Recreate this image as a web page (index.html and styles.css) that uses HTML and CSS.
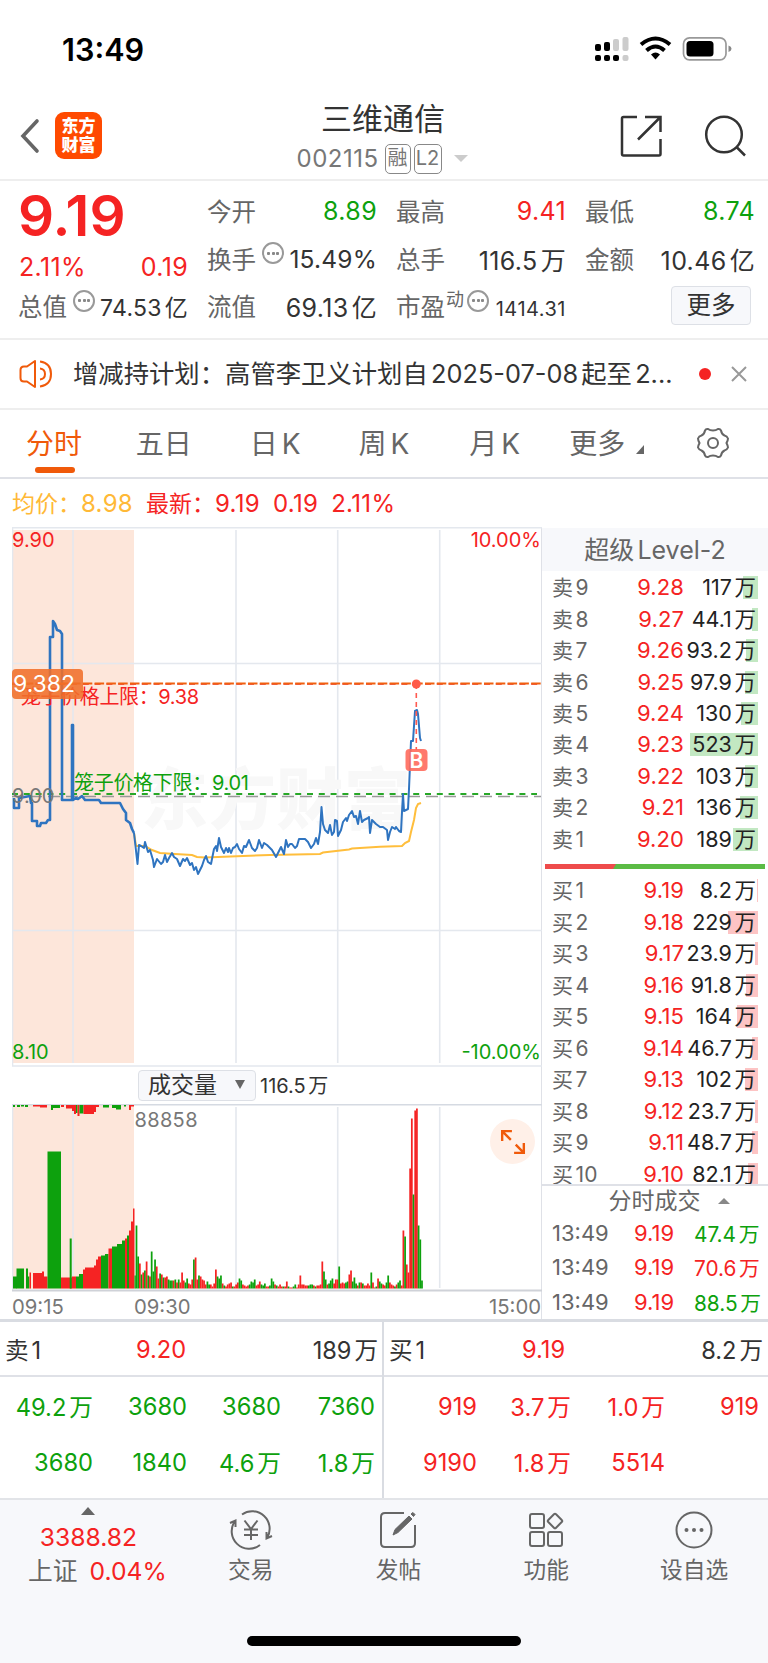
FILE: index.html
```html
<!DOCTYPE html>
<html lang="zh-CN">
<head>
  <meta charset="UTF-8">
  <title>三维通信 002115</title>
  <link rel="stylesheet" href="styles.css">
</head>
<body>

<!-- 状态栏 -->
<div class="status-bar">
  <span class="clock">13:49</span>
  <svg class="status-icons" width="140" height="28" viewBox="0 0 140 28">
    <g fill="#000">
      <rect x="0" y="9" width="6" height="7" rx="2"/><rect x="9" y="7" width="6" height="9" rx="2"/>
      <rect x="0" y="20" width="6" height="6" rx="2"/><rect x="9" y="20" width="6" height="6" rx="2"/><rect x="18" y="20" width="6" height="6" rx="2"/>
    </g>
    <g fill="#ccc">
      <rect x="18" y="4" width="6" height="12" rx="2"/><rect x="27.500" y="2" width="6" height="14" rx="2"/><rect x="27.500" y="20" width="6" height="6" rx="2"/>
    </g>
    <g fill="none" stroke="#000" stroke-width="4">
      <path d="M46 9.500Q60.500-2.500 75 9.500"/><path d="M51.500 15.500Q60.500 7.500 69.500 15.500"/>
    </g>
    <path d="M56 19.500Q60.500 15.500 65 19.500L60.500 24.500Z"/>
    <rect x="88.500" y="2.800" width="42.500" height="22" rx="6" fill="none" stroke="#999" stroke-width="1.700"/>
    <rect x="91.500" y="6" width="27" height="15.500" rx="3.500"/>
    <path d="M133.500 10.500q3 1 3 3.300t-3 3.300z" fill="#888"/>
  </svg>
</div>

<!-- 标题栏 -->
<div class="header">
  <svg class="back" width="20" height="36" viewBox="0 0 20 36"><path d="M17 3L3 18L17 33" fill="none" stroke="#666" stroke-width="3.600" stroke-linecap="round"/></svg>
  <div class="logo">东方<br>财富</div>
  <div class="stock">
    <h1>三维通信</h1>
    <div class="code"><span class="num">002115</span><span class="badge">融</span><span class="badge l2">L2</span><i class="arrow-down"></i></div>
  </div>
  <svg class="share" width="44" height="44" viewBox="0 0 44 44"><path d="M18 3H4.500Q3 3 3 4.500V40Q3 41.500 4.500 41.500H40Q41.500 41.500 41.500 40V25M26 3H41.500V18M41 3.500L19 25.500" fill="none" stroke="#333" stroke-width="2.500"/></svg>
  <svg class="search" width="44" height="44" viewBox="0 0 44 44"><circle cx="21" cy="20.500" r="17.800" fill="none" stroke="#333" stroke-width="2.500"/><path d="M33.500 33L42 41.500" stroke="#333" stroke-width="2.500"/></svg>
</div>

<!-- 行情 -->
<div class="quote">
  <div class="col main">
    <div class="price">9.19</div>
    <div class="row red change"><span>2.11%</span><span>0.19</span></div>
    <div class="row"><label>总值</label><i class="tip"></i><span class="fit">74.53亿</span></div>
  </div>
  <div class="col">
    <div class="row"><label>今开</label><span class="green">8.89</span></div>
    <div class="row"><label>换手</label><i class="tip"></i><span class="tight">15.49%</span></div>
    <div class="row"><label>流值</label><span>69.13亿</span></div>
  </div>
  <div class="col">
    <div class="row"><label>最高</label><span class="red">9.41</span></div>
    <div class="row"><label>总手</label><span>116.5万</span></div>
    <div class="row"><label>市盈<small>动</small></label><i class="tip near"></i><span class="pe">1414.31</span></div>
  </div>
  <div class="col">
    <div class="row"><label>最低</label><span class="green">8.74</span></div>
    <div class="row"><label>金额</label><span>10.46亿</span></div>
    <div class="row last"><button class="more-btn">更多</button></div>
  </div>
</div>

<!-- 公告 -->
<div class="news">
  <svg width="34" height="30" viewBox="0 0 34 30" fill="none" stroke="#f05a0a" stroke-width="2">
    <path d="M16 2L8 7.500H5Q1.500 7.500 1.500 11V19Q1.500 22.500 5 22.500H8L16 28Z" stroke-linejoin="round"/>
    <path d="M21 9.500Q26 10 26 15T21 20.500M21 2.500Q32 4 32 15T21 27.500"/>
  </svg>
  <p>增减持计划：高管李卫义计划自2025-07-08起至2...</p>
  <i class="dot"></i>
  <svg class="close" width="18" height="18" viewBox="0 0 18 18"><path d="M2 2L16 16M16 2L2 16" stroke="#999" stroke-width="2"/></svg>
</div>

<!-- 周期 -->
<div class="tabs">
  <span class="tab active">分时</span>
  <span class="tab">五日</span>
  <span class="tab">日K</span>
  <span class="tab">周K</span>
  <span class="tab">月K</span>
  <span class="tab more">更多<i></i></span>
  <svg class="gear" width="34" height="34" viewBox="0 0 34 34" fill="none" stroke="#666" stroke-width="2">
    <circle cx="17" cy="17" r="5"/>
    <path d="M9 4.500Q10 2.500 12 3Q14 4.500 17 4.500T22 3Q24 2.500 25 4.500Q25.500 8 28.500 9.500Q31 10 32 12.500Q32 14 30.500 17Q32 20 32 21.500Q31 24 28.500 24.500Q25.500 26 25 29.500Q24 31.500 22 31Q20 29.500 17 29.500T12 31Q10 31.500 9 29.500Q8.500 26 5.500 24.500Q3 24 2 21.500Q2 20 3.500 17Q2 14 2 12.500Q3 10 5.500 9.500Q8.500 8 9 4.500Z"/>
  </svg>
</div>

<div class="latest">
  <span class="avg">均价：<b>8.98</b></span><span>最新：<b>9.19</b></span><span><b>0.19</b></span><span><b>2.11%</b></span>
</div>

<div class="board">
  <div class="charts">
    <!-- 分时图 -->
    <svg class="chart" width="530" height="540" viewBox="12 527 530 540">
      <rect x="12" y="530" width="122" height="533" fill="#fde6da"/>
      <g stroke="#e4e8ee" stroke-width="1.600">
        <path d="M12 527.800H542M12.500 527V1066M12 1066H542M12 663.500H542M12 930.500H542"/>
        <path d="M73 530V1063M236 530V1063M337.700 530V1063M439.700 530V1063"/>
      </g>
      <text class="watermark" x="141" y="824" textLength="270">东方财富</text>
      <path d="M12 796.500H541" stroke="#999" stroke-width="1.700" stroke-dasharray="12 6"/>
      <path d="M12 794H537" stroke="#28a828" stroke-width="2" stroke-dasharray="6 5.800"/>
      <path class="avg-line" d="M134 833L136 846L145 846L152 850L160 853L175 854L192 855L197 857L205 857.500L270 855L320 854L323 852.500L349 849.500L352 848.500L380 846.700L402 846L405 843L409 841L411 832L414 820L416 808L418 804L421 803"/>
      <path class="price-line auction" d="M14 798V808H19V798L30 796L31 803H32V821H37V826H40L41 823H46L48 820H50V637H53V621L55 624L57 630L60 631L62 634V800H72V725H73V800L76 798L78 799L82 796L85 800H99L101 803H120L123 809L126 813V820L130 823L132 829L134 833"/>
      <path class="price-line" d="M134 833L137.500 864L139 845L141 846L144 848L145 842L148 852L150 850L153 860L154 867L157 859L161 864L163 862L165 855L167 862L169 858L172 853L174 857L177 859L180 866L183 859L185 861L187 858L190 865L192 863L194 870L196 867L198 874L202 866L204 860L206 856L208 862L211 864L214 849L216 846L217 851L219 838L221 847L224 853L226 848L228 852L229 848L231 853L233 848L235 847L237 844L239 849L242 853L244 846L246 847L249 840L252 848L255 851L257 848L259 840L262 848L264 843L267 845L270 848L272 850L276 857L281 847L284 854L286 840L288 847L290 844L292 844L295 848L297 846L299 839L305 839L308 842L311 848L314 844L316 838L318 844L320 832L321.500 807L323 824L325 830L328 833L330 825L332 835L334 832L335 820L337 821L338 836L341 830L343 822L346 818L347 821L349 815L352 811L354 817L356 816L358 824L360 811L362 822L364 820L368 818L369 817L370 833L372 820L376 824L380 827L383 827L387 830L388 840L390 832L392 827L395 829L396 827L399 831L401 832L402 812L403 794L404 811L408 809L409 789L411 741L413 741L415 711L417 710L418 714L420 738L421 741"/>
      <path d="M12 684H541" stroke="#e22" stroke-width="1.500" stroke-dasharray="6 5.800"/>
      <path d="M12 683.500H541" stroke="#f06010" stroke-width="2" stroke-dasharray="9.500 2.300"/>
      <text class="t red" x="21" y="704" textLength="178">笼子价格上限：9.38</text>
      <text class="t green" x="74" y="790" textLength="175">笼子价格下限：9.01</text>
      <text class="t red" x="12" y="547">9.90</text>
      <text class="t red end" x="541" y="547">10.00%</text>
      <text class="t gray" x="12" y="803">9.00</text>
      <text class="t green" x="12" y="1059">8.10</text>
      <text class="t green end" x="541" y="1059">-10.00%</text>
      <rect x="12" y="669" width="71" height="30" rx="4" fill="#f0702a" fill-opacity=".88"/>
      <text class="tag" x="13" y="692" textLength="62">9.382</text>
      <path d="M416.300 684V750" stroke="#ff5a50" stroke-width="1.600" stroke-dasharray="5 4"/>
      <circle cx="416.300" cy="684" r="4.500" fill="#ff5a48"/>
      <rect x="405.500" y="749" width="22" height="22" rx="4" fill="#ff6a5c" fill-opacity=".9"/>
      <text class="buy" x="416.500" y="767.500">B</text>
    </svg>

    <div class="indicator">
      <div class="select">成交量<i></i></div>
      <span>116.5万</span>
    </div>

    <!-- 成交量 -->
    <div class="volume">
      <svg class="chart" width="530" height="188" viewBox="12 1104 530 188">
        <rect x="12" y="1105" width="122" height="184" fill="#fde6da"/>
        <g stroke="#e4e8ee" stroke-width="1.600">
          <path d="M12.500 1104V1290M73 1107V1288M236 1107V1288M337.700 1107V1288M439.700 1107V1288"/>
        </g>
        <path d="M12 1104.700H542" stroke="#d5dae2" stroke-width="1.500"/>
        <path d="M12 1290.500H542" stroke="#cfd2d8" stroke-width="2"/>
        <g id="bars"></g>
        <text class="t gray" x="134.500" y="1126.500" textLength="63">88858</text>
      </svg>
      <div class="expand">
        <svg width="26" height="26" viewBox="0 0 24 24" fill="none" stroke="#f05a0a" stroke-width="2.200"><path d="M2 11V2H11M2 2L10 10M22 13V22H13M14.500 14.500L22 22"/></svg>
      </div>
    </div>
    <div class="axis"><span>09:15</span><span>09:30</span><span>15:00</span></div>
  </div>

  <!-- 盘口 -->
  <div class="depth">
    <div class="depth-title">超级Level-2</div>
    <div class="orders" id="sell"></div>
    <div class="ratio"></div>
    <div class="orders buy-list" id="buy"></div>
    <div class="deals-title">分时成交<i></i></div>
    <div class="deal"><span>13:49</span><span class="red">9.19</span><span class="green">47.4万</span></div>
    <div class="deal"><span>13:49</span><span class="red">9.19</span><span class="red">70.6万</span></div>
    <div class="deal"><span>13:49</span><span class="red">9.19</span><span class="green">88.5万</span></div>
  </div>
</div>

<!-- 买一卖一队列 -->
<div class="queue">
  <div class="side">
    <div class="side-head"><span>卖1</span><span class="red">9.20</span><span>189万</span></div>
    <div class="cells green">
      <span>49.2万</span><span>3680</span><span>3680</span><span>7360</span>
      <span>3680</span><span>1840</span><span>4.6万</span><span>1.8万</span>
    </div>
  </div>
  <div class="side">
    <div class="side-head"><span>买1</span><span class="red">9.19</span><span>8.2万</span></div>
    <div class="cells red">
      <span>919</span><span>3.7万</span><span>1.0万</span><span>919</span>
      <span>9190</span><span>1.8万</span><span>5514</span>
    </div>
  </div>
</div>

<!-- 底部导航 -->
<div class="footer">
  <div class="nav">
    <div class="index">
      <i></i>
      <div class="red">3388.82</div>
      <div class="sh">上证<span class="red">0.04%</span></div>
    </div>
    <div class="item">
      <svg width="44" height="40" viewBox="0 0 44 40" fill="none" stroke="#666" stroke-width="2">
        <path d="M13 4.500A17.500 17.500 0 0 1 38 28M31 35A17.500 17.500 0 0 1 6 11M1 13L6.500 10.500V17M43 26L37.500 28.500V22"/>
        <path d="M15.500 10.500L22 19L28.500 10.500M22 19V30M15 19.500H29M15 25H29"/>
      </svg>
      交易
    </div>
    <div class="item">
      <svg width="40" height="40" viewBox="0 0 40 40" fill="none" stroke="#666" stroke-width="2">
        <path d="M26 3H7Q3 3 3 7V33Q3 37 7 37H33Q37 37 37 33V15"/>
        <path d="M15 25L17 19.500L31 6L34 9L20 22.500ZM33 4L35 2.500L37 4.500L35.500 6.500Z" fill="#666" stroke-width="1"/>
      </svg>
      发帖
    </div>
    <div class="item">
      <svg width="40" height="40" viewBox="0 0 40 40" fill="none" stroke="#666" stroke-width="2">
        <rect x="4" y="4" width="14" height="14" rx="2"/><rect x="4" y="22" width="14" height="14" rx="2"/><rect x="22" y="22" width="14" height="14" rx="2"/>
        <rect x="23.500" y="5.500" width="11" height="11" rx="1.500" transform="rotate(45 29 11)"/>
      </svg>
      功能
    </div>
    <div class="item">
      <svg width="40" height="40" viewBox="0 0 40 40"><circle cx="20" cy="20" r="17.500" fill="none" stroke="#666" stroke-width="2"/><g fill="#666"><circle cx="12.500" cy="20" r="2"/><circle cx="20" cy="20" r="2"/><circle cx="27.500" cy="20" r="2"/></g></svg>
      设自选
    </div>
  </div>
  <div class="home-bar"></div>
</div>

<script src="script.js"></script>
</body>
</html>
```
FILE: styles.css
```css
* {
  margin: 0; padding: 0; box-sizing: border-box;
}
body {
  width: 768px;
  height: 1663px;
  overflow: hidden;
  background: #fff;
  color: #333;
  font-family: Inter, "Noto Sans CJK SC", sans-serif;
  font-size: 24px;
  text-autospace: normal;
  white-space: nowrap;
}
i { font-style: normal; flex: none; }
b { font-weight: 400; }
svg { display: block; flex: none; }
.red { color: #f52323; }
.green { color: #0da10d; }

/* 状态栏 */
.status-bar {
  height: 98px;
  padding: 0 35px 0 62px;
  display: flex;
  justify-content: space-between;
  align-items: center;
}
.clock {
  font-size: 30.6px;
  font-weight: 600;
  color: #000;
}
.status-icons { margin-right: -2px; }

/* 标题栏 */
.header {
  height: 83px;
  padding-left: 20px;
  display: flex;
  align-items: center;
  border-bottom: 2px solid #eee;
}
.back { margin-top: -6px; }
.logo {
  width: 47px;
  height: 47px;
  margin: -7px 0 0 15px;
  padding-top: 5px;
  border-radius: 9px;
  background: #ff4a00;
  color: #fff;
  font-size: 17px;
  font-weight: 900;
  line-height: 19px;
  text-align: center;
}
.stock {
  width: 300px;
  margin: 0 0 0 131px;
  text-align: center;
}
.stock h1 {
  font-size: 31px;
  font-weight: 400;
  line-height: 38px;
}
.code {
  height: 39px;
  padding: 2px 2px 0 0;
  display: flex;
  justify-content: center;
  align-items: center;
  color: #777;
}
.code .num { letter-spacing: .5px; }
.badge {
  width: 26px;
  height: 30px;
  margin-left: 6px;
  border: 1.5px solid #888;
  border-radius: 5px;
  font-size: 20px;
  line-height: 27px;
  text-align: center;
}
.badge.l2 { width: 28px; margin-left: 3px; }
.arrow-down {
  margin-left: 12px;
  border: 7px solid transparent;
  border-top-color: #ccc;
  border-bottom: 0;
}
.share { margin: -6px 0 0 86px; }
.search { margin: -6px 0 0 40px; }

/* 行情 */
.quote {
  height: 159px;
  padding: 7px 13px 0 19px;
  display: grid;
  grid-template-columns: repeat(4, 169px);
  column-gap: 20px;
  border-bottom: 2px solid #eee;
}
.row {
  height: 47.5px;
  padding-bottom: 1px;
  display: flex;
  justify-content: space-between;
  align-items: center;
}
.row span {
  font-size: 25px;
  letter-spacing: .35px;
}
.row label {
  margin: -1px 0 0 -1px;
  font-size: 24.5px;
  color: #666;
  display: flex;
}
.row small {
  font-size: 18px;
  margin: -3px 0 0 1px;
}
.price {
  height: 55px;
  margin-left: -1px;
  font-size: 56.5px;
  font-weight: 600;
  line-height: 55px;
  color: #f52323;
}
.row.change { height: 40px; padding: 7px 0 0; }
.row.change span { font-size: 25px; }
.tip {
  width: 22px;
  height: 22px;
  margin: -11px 0 0 1px;
  border: 2px solid #999;
  border-radius: 50%;
  background:
    radial-gradient(circle, #888 1.3px, transparent 1.8px) center / 5px 5px no-repeat,
    radial-gradient(circle, #888 1.3px, transparent 1.8px) 2px center / 5px 5px no-repeat,
    radial-gradient(circle, #888 1.3px, transparent 1.8px) 11px center / 5px 5px no-repeat;
}
.tip.near { margin-right: 4px; }
.row .fit { font-size: 23px; letter-spacing: .3px; }
.row .tight { font-size: 24.5px; letter-spacing: .2px; }
.row .pe { font-size: 20px; padding-top: 6px; letter-spacing: .5px; }
.more-btn {
  width: 80px;
  height: 39px;
  margin: -2px 4px 0 auto;
  border: 1.5px solid #dde0e6;
  border-radius: 4px;
  background: #f7f8fb;
  color: #333;
  font: inherit;
  font-size: 24.5px;
  line-height: 35px;
}

/* 公告 */
.news {
  height: 70px;
  padding: 0 20px 0 19px;
  display: flex;
  align-items: center;
  border-bottom: 2px solid #eee;
}
.news p {
  width: 612px;
  margin: -4px 0 0 20px;
  font-size: 25.35px;
}
.dot {
  width: 12px;
  height: 12px;
  margin-left: 14px;
  border-radius: 50%;
  background: #f52323;
}
.close { margin-left: 19px; }

/* 周期 */
.tabs {
  height: 69px;
  padding: 0 38px 3px 26px;
  display: flex;
  align-items: center;
  border-bottom: 2px solid #dfe1e7;
  color: #666;
  font-size: 28px;
}
.tab { width: 110px; }
.tab:nth-child(2) { width: 114px; }
.tab:nth-child(3) { width: 109px; letter-spacing: .5px; }
.tab:nth-child(4) { width: 111px; letter-spacing: .5px; }
.tab:nth-child(5) { width: 100px; letter-spacing: .5px; }
.tab.more { width: 127px; }
.more i {
  display: inline-block;
  margin-left: 11px;
  border-left: 8px solid transparent;
  border-bottom: 9px solid #666;
}
.gear { margin-top: 2px; }
.tab.active { position: relative; color: #f05a0a; }
.tab.active::after {
  content: "";
  position: absolute;
  left: 9px;
  bottom: -11px;
  width: 40px;
  height: 6px;
  border-radius: 3px;
  background: #f05a0a;
}

.latest {
  height: 48px;
  padding: 0 0 1px 12px;
  display: flex;
  align-items: baseline;
  gap: 13px;
  color: #f52323;
  font-size: 23px;
  line-height: 49px;
}
.latest b { font-size: 24px; letter-spacing: .3px; }
.latest .avg { color: #ffb937; }

/* 图表区 */
.board {
  height: 795px;
  display: flex;
  border-bottom: 3px solid #d9dce2;
}
.charts {
  width: 542px;
  padding-left: 12px;
  border-right: 1px solid #dfe1e7;
}
.chart text { font-family: Inter, "Noto Sans CJK SC", sans-serif; }
.chart .t { font-size: 20px; fill: #f52323; }
.chart .green { fill: #0da10d; }
.chart .gray { fill: #777; }
.chart .end { text-anchor: end; }
.chart .tag { font-size: 23px; fill: #fff; }
.chart .buy { font-size: 21px; font-weight: 600; fill: #fff; text-anchor: middle; }
.chart .watermark { font-size: 67px; font-weight: 900; fill: #f8f8f8; }
.price-line {
  fill: none;
  stroke: #2f74c0;
  stroke-width: 2;
  stroke-linejoin: round;
}
.price-line.auction { stroke-width: 2.6; }
.avg-line {
  fill: none;
  stroke: #ffbe3c;
  stroke-width: 2;
}
.indicator {
  height: 37px;
  padding: 3px 0 0 126px;
  display: flex;
  font-size: 20px;
  line-height: 32px;
}
.select {
  width: 118px;
  height: 31px;
  margin-right: 4px;
  padding-left: 9px;
  border: 1.5px solid #dde0e6;
  border-radius: 4px;
  background: #f7f8fb;
  font-size: 23px;
  line-height: 29px;
}
.select i {
  display: inline-block;
  margin: 0 0 4px 18px;
  border: 5px solid transparent;
  border-top: 9px solid #666;
  border-bottom: 0;
}
.volume { position: relative; }
.expand {
  position: absolute;
  left: 478px;
  top: 15px;
  width: 45px;
  height: 45px;
  display: flex;
  align-items: center;
  justify-content: center;
  border-radius: 50%;
  background: #fff0e8;
}
.axis {
  display: grid;
  grid-template-columns: 122px 1fr auto;
  color: #777;
  font-size: 20.3px;
  line-height: 29px;
}

/* 盘口 */
.depth {
  width: 226px;
  padding-top: 1px;
}
.depth-title {
  height: 43px;
  margin-bottom: 1px;
  background: #f7f8fb;
  color: #666;
  font-size: 25px;
  line-height: 44px;
  text-align: center;
}
.order {
  height: 31.45px;
  padding: 0 10px;
  display: grid;
  grid-template-columns: 60px 72px 1fr;
  align-items: center;
  font-size: 22px;
  line-height: 31px;
}
.order .name { color: #666; font-size: 21px; }
.order .num { text-align: right; letter-spacing: .1px; }
.order .vol {
  position: relative;
  text-align: right;
  padding-right: 2px;
  color: #222;
  font-size: 21.5px;
}
.order .vol i {
  position: absolute;
  right: 0;
  top: 4px;
  height: 23px;
  background: rgba(70, 185, 70, .33);
  z-index: -1;
}
.buy-list .vol i { background: rgba(250, 70, 70, .32); }
.ratio {
  height: 5px;
  margin: 9px 3px 6px;
  background: linear-gradient(120deg, #ee4b4b 61px, #5bbb45 62px);
}
.buy-list {
  height: 309px;
  overflow: hidden;
}
.buy-list .order { height: 31.5px; }
.deals-title {
  height: 32px;
  padding-left: 28px;
  border-top: 2px solid #dfe1e7;
  color: #666;
  font-size: 23px;
  text-align: center;
  line-height: 30px;
}
.deals-title i {
  display: inline-block;
  margin: 0 0 5px 17px;
  border: 6px solid transparent;
  border-bottom-color: #888;
  border-top: 0;
}
.deal {
  height: 34.7px;
  padding: 0 12px 1.5px 10px;
  display: grid;
  grid-template-columns: 82px 60px 1fr;
  align-items: center;
  color: #666;
  font-size: 22px;
}
.deal span:last-child { text-align: right; font-size: 20.8px; }

/* 队列 */
.queue {
  height: 176px;
  display: flex;
}
.side { width: 384px; }
.side:first-child { border-right: 2px solid #d9dce2; }
.side-head {
  height: 55px;
  padding: 1px 5px 0;
  display: grid;
  grid-template-columns: 131px 1fr auto;
  align-items: center;
  border-bottom: 2px solid #dfe1e7;
}
.side:first-child .side-head { padding-right: 4px; }
.side + .side .side-head { grid-template-columns: 133px 1fr auto; }
.side-head span { font-size: 23.6px; }
.cells {
  display: grid;
  grid-template-columns: repeat(4, 94px);
  grid-auto-rows: 56px;
  margin-left: -1px;
  padding-top: 1px;
  align-items: center;
  text-align: right;
  font-size: 23.7px;
}

/* 底部 */
.footer {
  height: 165px;
  border-top: 2px solid #e2e4e8;
  background: #f7f8fb;
}
.nav {
  height: 136px;
  display: flex;
  color: #666;
}
.index {
  width: 177px;
  padding-top: 7px;
  text-align: center;
  font-size: 24.7px;
  line-height: 35px;
}
.index i {
  display: block;
  width: 0;
  margin: 0 auto 5px;
  border: 7px solid transparent;
  border-bottom: 8px solid #666;
  border-top: 0;
}
.sh { padding-left: 18px; line-height: 33px; }
.sh span { margin-left: 9px; }
.item {
  width: 148px;
  padding-top: 10px;
  text-align: center;
  font-size: 22.7px;
  line-height: 40px;
}
.item svg { margin: 0 auto; }
.home-bar {
  width: 274px;
  height: 10px;
  margin: 0 auto;
  border-radius: 5px;
  background: #000;
}
```
FILE: script.js
```js
const RED = '#f52323';
const GREEN = '#0da10d';

// 档位, 价格, 数量, 底色宽度
const sell = [
  ['卖9', '9.28', '117万', 15], ['卖8', '9.27', '44.1万', 6], ['卖7', '9.26', '93.2万', 12],
  ['卖6', '9.25', '97.9万', 13], ['卖5', '9.24', '130万', 17], ['卖4', '9.23', '523万', 68],
  ['卖3', '9.22', '103万', 13], ['卖2', '9.21', '136万', 18], ['卖1', '9.20', '189万', 25]
];
const buy = [
  ['买1', '9.19', '8.2万', 1], ['买2', '9.18', '229万', 30], ['买3', '9.17', '23.9万', 3],
  ['买4', '9.16', '91.8万', 12], ['买5', '9.15', '164万', 21], ['买6', '9.14', '46.7万', 6],
  ['买7', '9.13', '102万', 13], ['买8', '9.12', '23.7万', 3], ['买9', '9.11', '48.7万', 6],
  ['买10', '9.10', '82.1万', 10]
];

function renderOrders(id, list) {
  document.getElementById(id).innerHTML = list.map(o => `
    <div class="order">
      <span class="name">${o[0]}</span>
      <span class="num red">${o[1]}</span>
      <span class="vol"><i style="width:${o[3]}px"></i>${o[2]}</span>
    </div>`).join('');
}

// 集合竞价: x起, x止, 高度, 颜色
const auction = [
  [13, 17, 12, 'g'], [16.5, 24, 20, 'g'], [26, 28, 20, 'g'], [28, 29.3, 12, 'g'], [29.5, 31, 16, 'r'],
  [33, 42, 15.5, 'r'], [42, 44, 17, 'r'], [44, 47.5, 12, 'r'], [47.5, 61, 137, 'g'], [61, 72, 11, 'r'],
  [69.7, 71.7, 50, 'g'], [72, 76, 12, 'r'], [76, 79, 12, 'g'], [79, 83, 14.5, 'g'], [83, 85, 19, 'r'],
  [85, 94, 21, 'r'], [94, 96, 23, 'r'], [96, 98, 29, 'r'], [98, 101, 32, 'r'], [101, 105, 33, 'g'],
  [105, 108.5, 34.5, 'g'], [108.5, 112, 40, 'r'], [112, 117, 42, 'g'], [117, 122, 44.5, 'g'],
  [122, 125, 48, 'g'], [125, 127, 50, 'r'], [127, 129, 53, 'g'], [129, 131, 58, 'r'],
  [131, 133, 67, 'r'], [133, 134.5, 80, 'r']
];
const unmatched = [
  [13, 15, 2, 'g'], [17, 20, 2, 'g'], [21, 24, 1.5, 'g'], [25, 28, 2, 'g'], [33, 40, 1.5, 'r'], [40, 47, 2.5, 'r'],
  [51, 53, 5, 'g'], [53, 60, 3, 'g'], [61, 64, 2, 'r'], [66, 72, 3.5, 'r'], [72, 74, 6, 'r'], [74, 76, 9, 'r'],
  [76, 77.5, 8, 'g'], [77.5, 79.5, 11, 'r'], [79.5, 83.5, 8.5, 'g'], [83.5, 94, 9, 'r'], [94, 96, 7, 'r'],
  [96, 99, 2, 'r'], [103, 109, 2.5, 'g'], [112, 116, 3, 'g'], [116, 121, 4.5, 'g'], [124, 126, 1.5, 'g'],
  [129, 131, 5, 'r'], [131, 134, 1.5, 'r']
];
// 连续竞价, 每分钟一根
const minutes = `g63 g32 r25 g14 r16 g18 r27 g13 r12 g37 g17 g29 r22 r10 g15 r14 g11 r11 r12 g9 g8 g8 r8 g9 r6 g9 r6 r16 r8 g6
  g10 r5 r4 r9 g29 r31 r9 g13 r12 r9 r8 r4 g7 g4 r4 r2 r5 r19 g12 g10 g13 r5 g3 r2 r4 r5 r6 g2 r2 r4 r6 g10 g8 r4
  r3 r2 r3 g4 g7 g6 g9 r3 r4 r7 g4 g3 g5 r2 r2 g3 g10 g7 r4 g3 r2 r4 r2 g2 r2 r7 g2 r1 r1 g2 g4 r1 r4 r13 r4 r4
  r3 r3 g3 g4 g4 r3 g2 r3 r3 r4 r27 g17 g9 r4 g5 g8 g10 r5 r9 r9 g22 r5 r6 r5 g6 g7 r14 r18 g7 g11 g5 r3 g6 r6
  g5 r3 r3 r5 r3 g16 r6 r1 g2 r10 g7 g5 r4 r3 g6 g13 r6 r4 r3 g2 r4 g6 g8 r3 r58 g52 r24 r16 r120 r170 g94 r178
  r180 g63 g49 g8`.split(/\s+/);

const BASE = 1288.5;

function bar(x, y, w, h, c) {
  return `<rect x="${x.toFixed(2)}" y="${y}" width="${w.toFixed(2)}" height="${h}" fill="${c === 'r' ? RED : GREEN}"/>`;
}

function renderVolume() {
  let svg = '';
  auction.forEach(b => svg += bar(b[0], BASE - b[2], b[1] - b[0], b[2], b[3]));
  unmatched.forEach(b => svg += bar(b[0], 1105, b[1] - b[0], b[2], b[3]));
  svg += bar(134.5, BASE - 13, 1.3, 13, 'g');
  const step = 285.5 / (minutes.length - 1);
  minutes.forEach((m, i) => {
    const h = Number(m.slice(1));
    svg += bar(135.6 + i * step, BASE - h, 1.75, h, m[0]);
  });
  document.getElementById('bars').innerHTML = svg;
}

renderOrders('sell', sell);
renderOrders('buy', buy);
renderVolume();
```
